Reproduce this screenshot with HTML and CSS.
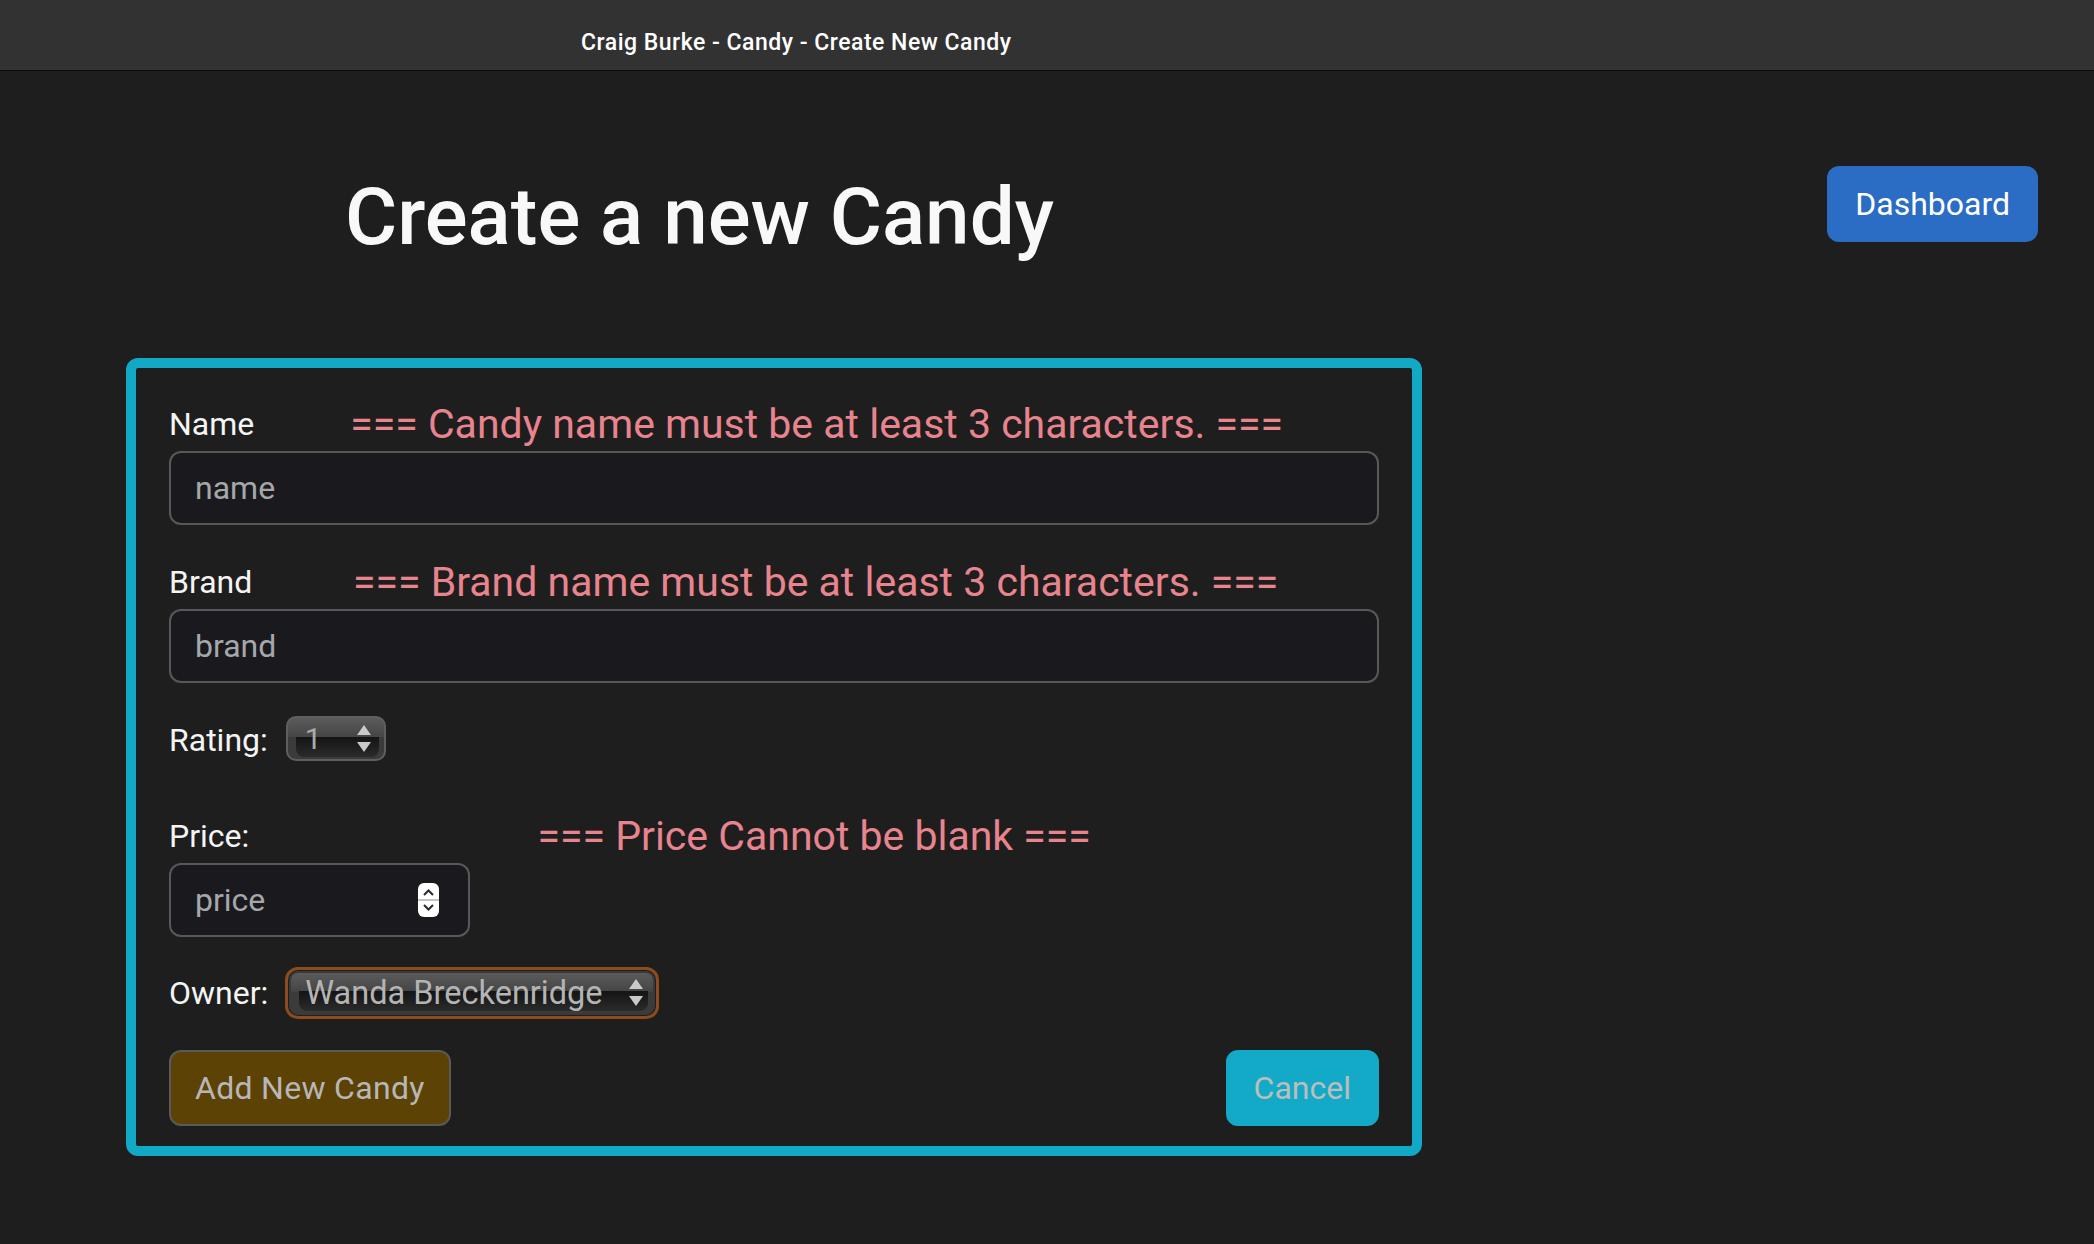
FILE: index.html
```html
<!DOCTYPE html>
<html lang="en">
<head>
<meta charset="utf-8">
<title>Create New Candy</title>
<link rel="stylesheet" href="styles.css">
</head>
<body>
<div class="titlebar">Craig Burke - Candy - Create New Candy</div>
<main class="page">
  <header class="header">
    <h1 class="title">Create a new Candy</h1>
    <a class="btn btn-primary">Dashboard</a>
  </header>
  <form class="candy-form">
    <div class="group">
      <div class="label-row">
        <label class="label">Name</label>
        <span class="error">=== Candy name must be at least 3 characters. ===</span>
      </div>
      <input class="control" placeholder="name">
    </div>
    <div class="group">
      <div class="label-row">
        <label class="label">Brand</label>
        <span class="error">=== Brand name must be at least 3 characters. ===</span>
      </div>
      <input class="control" placeholder="brand">
    </div>
    <div class="inline-row row-rating">
      <label class="label">Rating:</label>
      <div class="select select-rating">
        <span class="select-value">1</span>
        <svg class="select-arrows" width="14" height="28" viewBox="0 0 14 28"><path d="M0 10 L7 0 L14 10 Z M0 17 L14 17 L7 27 Z" fill="#c9c9c9"/></svg>
      </div>
    </div>
    <div class="group group-price">
      <div class="label-row">
        <label class="label">Price:</label>
        <span class="error">=== Price Cannot be blank ===</span>
      </div>
      <div class="control control-price">
        <input class="price-input" placeholder="price">
        <svg class="spinner" width="21" height="34" viewBox="0 0 21 34">
          <rect x="0" y="0" width="21" height="34" rx="6" fill="#ffffff"/>
          <line x1="0" y1="17" x2="21" y2="17" stroke="#c4c4c4" stroke-width="2"/>
          <polyline points="6,12 10.5,7.5 15,12" fill="none" stroke="#2a2a2a" stroke-width="2"/>
          <polyline points="6,22 10.5,26.5 15,22" fill="none" stroke="#2a2a2a" stroke-width="2"/>
        </svg>
      </div>
    </div>
    <div class="inline-row row-owner">
      <label class="label">Owner:</label>
      <div class="focus-ring">
        <div class="select select-owner">
          <span class="select-value">Wanda Breckenridge</span>
          <svg class="select-arrows" width="14" height="28" viewBox="0 0 14 28"><path d="M0 10 L7 0 L14 10 Z M0 17 L14 17 L7 27 Z" fill="#c9c9c9"/></svg>
        </div>
      </div>
    </div>
    <div class="actions">
      <button type="button" class="btn btn-add">Add New Candy</button>
      <button type="button" class="btn btn-cancel">Cancel</button>
    </div>
  </form>
</main>
</body>
</html>
```

FILE: styles.css
```css
* { box-sizing: border-box; }

body {
  margin: 0;
  background: #1e1e1e;
  font-family: Roboto, "Liberation Sans", sans-serif;
  color: #f4f4f4;
}

.titlebar {
  height: 71px;
  background: #323232;
  border-bottom: 1px solid #0d0d0d;
  padding: 30px 0 0 581px;
  font-size: 23px;
  line-height: 26px;
  font-weight: 500;
  letter-spacing: 0.5px;
  color: #ffffff;
}

.page {
  padding: 95px 56px 0 126px;
}

.header {
  display: flex;
  justify-content: space-between;
  align-items: flex-start;
  padding-left: 219px;
}

.title {
  margin: 0;
  padding-top: 3px;
  font-size: 80px;
  line-height: 96px;
  font-weight: 500;
  color: #f8f8f8;
}

.btn {
  display: inline-flex;
  align-items: center;
  justify-content: center;
  height: 76px;
  padding: 0 26px;
  font-family: inherit;
  font-size: 32px;
  line-height: 48px;
  border: 2px solid transparent;
  border-radius: 12px;
  cursor: pointer;
}

.btn-primary {
  background: #2b6cc4;
  border-color: #2b6cc4;
  color: #ffffff;
}

.candy-form {
  width: 1296px;
  margin-top: 93px;
  border: 10px solid #12a9c6;
  border-radius: 12px;
  padding: 32px 33px 20px;
}

.group { margin-bottom: 33px; }
.group-price { margin-bottom: 30px; }

.label-row {
  display: flex;
  height: 51px;
}

.label {
  font-size: 32px;
  line-height: 48px;
  color: #f4f4f4;
  white-space: nowrap;
}

.error {
  flex: 1;
  text-align: center;
  font-size: 41px;
  line-height: 48px;
  color: #e8848e;
  white-space: nowrap;
}

.control {
  display: block;
  width: 100%;
  height: 74px;
  padding: 0 24px;
  background: #1a1a1e;
  border: 2px solid #58585a;
  border-radius: 12px;
  font-family: inherit;
  font-size: 32px;
  color: #dee2e6;
  outline: none;
}

.control::placeholder { color: #a5a8ab; }

.control-price {
  display: flex;
  align-items: center;
  width: 301px;
  padding: 0 29px 0 24px;
}

.price-input {
  flex: 1;
  min-width: 0;
  background: transparent;
  border: 0;
  outline: none;
  padding: 0;
  font-family: inherit;
  font-size: 32px;
  color: #dee2e6;
}

.price-input::placeholder { color: #a5a8ab; }

.spinner { flex: none; display: block; }

.inline-row {
  display: flex;
  align-items: center;
  gap: 18px;
}

.row-rating {
  align-items: flex-start;
  height: 48px;
  margin-bottom: 48px;
}

.row-owner {
  height: 52px;
  margin-bottom: 31px;
  gap: 17px;
}

.select {
  position: relative;
  display: flex;
  align-items: center;
  justify-content: space-between;
  border: 2px solid #5f5f5f;
  border-radius: 10px;
  background: linear-gradient(#5b5b5b, #454545 46%, #3b3b3b 47%, #3b3b3b);
  overflow: hidden;
}

.select::after {
  content: "";
  position: absolute;
  left: 8px;
  right: 5px;
  top: 46%;
  bottom: 2px;
  border-radius: 0 0 8px 8px;
  background: linear-gradient(#141414, #2b2b2b);
}

.select > * {
  position: relative;
  z-index: 1;
}

.select-value {
  color: #ababab;
  white-space: nowrap;
}

.select-rating {
  width: 100px;
  height: 45px;
  padding: 0 13px 0 17px;
  font-size: 30px;
}

.focus-ring {
  width: 374px;
  height: 52px;
  padding: 1px;
  border: 3px solid #8e4c1e;
  border-radius: 13px;
}

.select-owner {
  height: 100%;
  padding: 0 10px 0 14px;
  border-color: #3a3a3a;
  border-radius: 9px;
  font-size: 32.5px;
}

.select-owner .select-value { color: #b4b4b4; }

.actions {
  display: flex;
  justify-content: space-between;
}

.btn-add {
  padding: 0 24px;
  letter-spacing: 0.3px;
  background: #5c4204;
  border-color: #595959;
  color: #b7b7b7;
}

.btn-cancel {
  padding: 0 26px;
  background: #12aac7;
  border-color: #12aac7;
  color: #bdbdbd;
}
```
